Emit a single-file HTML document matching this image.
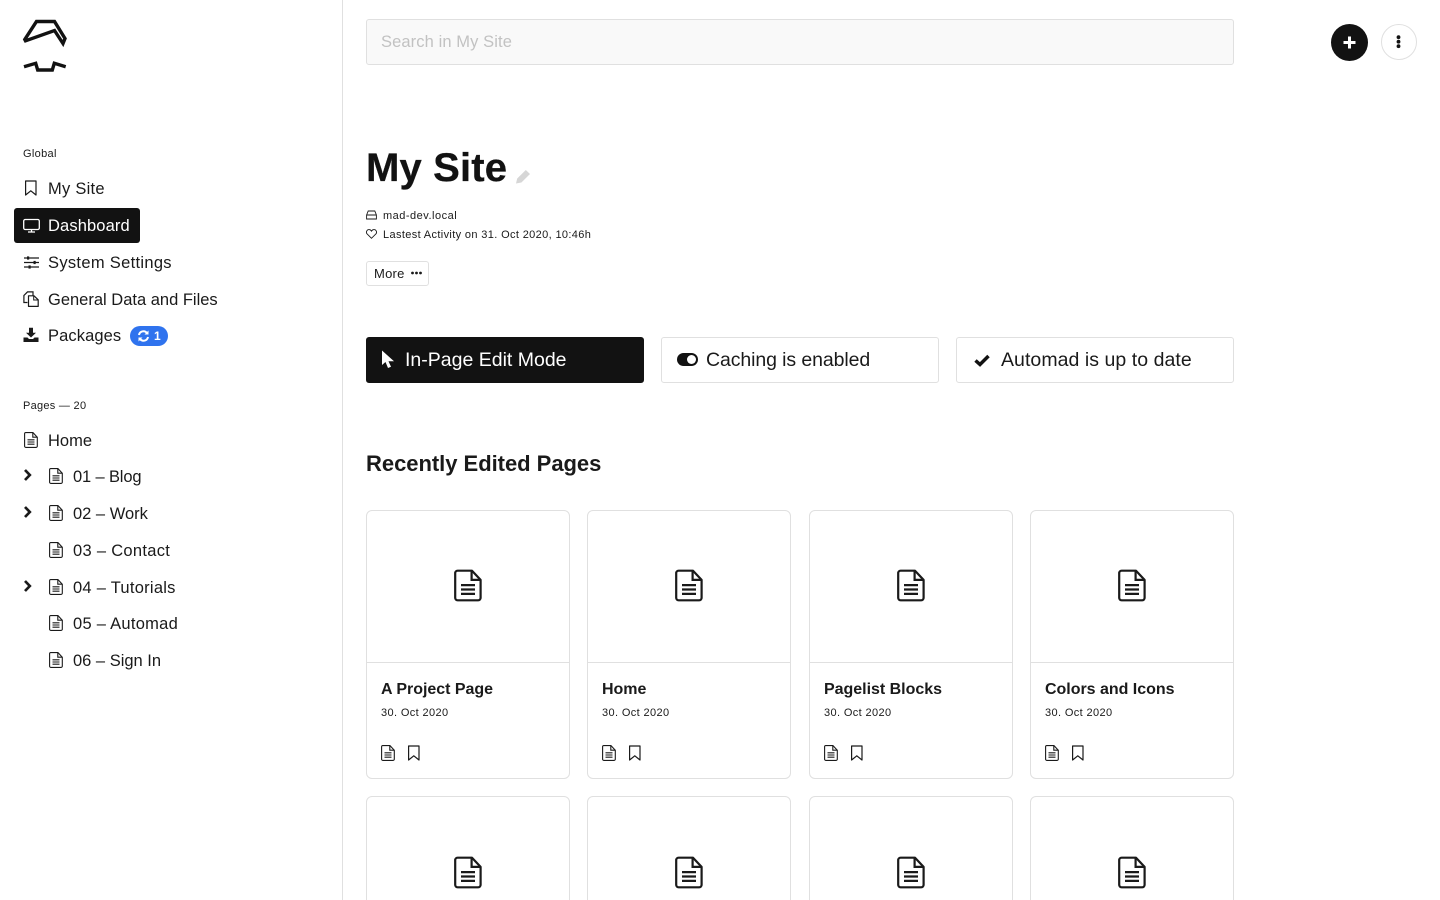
<!DOCTYPE html>
<html lang="en"><head><meta charset="utf-8"><title>My Site</title>
<style>
html,body{margin:0;padding:0;width:1440px;height:900px;overflow:hidden;background:#fff}
body{position:relative;font-family:"Liberation Sans",sans-serif;color:#121212;-webkit-font-smoothing:antialiased}
.t{position:absolute;white-space:nowrap;line-height:20px;height:20px}
.n{font-size:16.5px;color:#1a1a1a}
.s{font-size:11px;letter-spacing:.33px;color:#1a1a1a}
.h{font-size:19.5px;color:#1a1a1a}
.b{position:absolute;box-sizing:border-box;border:1px solid #e0e0e0;border-radius:3px;background:#fff}
svg{position:absolute;overflow:visible}
.card{position:absolute;box-sizing:border-box;width:204px;height:269px;border:1px solid #e0e0e0;border-radius:6px;background:#fff;overflow:hidden}
.card .l{position:absolute;left:0;right:0;top:151px;height:1px;background:#e0e0e0}
.card .ti{position:absolute;left:14px;top:167px;font-size:16px;font-weight:bold;line-height:20px;white-space:nowrap;color:#1a1a1a;margin-top:2px;letter-spacing:-.02px}
.card .da{position:absolute;left:14px;top:192px;font-size:11px;line-height:20px;white-space:nowrap;letter-spacing:.38px;color:#1a1a1a}
</style></head><body>
<svg width="0" height="0" style="position:absolute">
<defs>
<symbol id="doc" viewBox="0 0 16 16"><path d="M2.800.6H10L14.300 5.200V14.200a1.200 1.200 0 0 1-1.200 1.200H2.800a1.200 1.200 0 0 1-1.200-1.200V1.800A1.200 1.200 0 0 1 2.800.6z" fill="none" stroke="currentColor" stroke-width="1.100" stroke-linejoin="round"/><path d="M9.800.8V5.200h4.500" fill="none" stroke="currentColor" stroke-width="1.100"/><path d="M4.500 7.800h7M4.500 10h7M4.500 12.200h7" stroke="currentColor" stroke-width="1.100"/></symbol>
<symbol id="bm" viewBox="0 0 16 16"><path d="M2.600 1h10.400v14L7.800 10.800 2.600 15z" fill="none" stroke="currentColor" stroke-width="1.200" stroke-linejoin="round"/></symbol>
<symbol id="chev" viewBox="0 0 16 16"><path d="M5 3l4.800 5L5 13" fill="none" stroke="currentColor" stroke-width="2.700"/></symbol>
</defs></svg>

<div style="position:absolute;left:342px;top:0;width:1px;height:900px;background:#e0e0e0"></div>

<svg style="left:23px;top:19px" width="44" height="54" viewBox="0 0 44 54"><path d="M2.500 21.800 1.800 20.500 13.500 2.500H31.500L42 19.500 40 24.500 31.500 11.500z" fill="none" stroke="#121212" stroke-width="3.400"/><path d="M1 47.700 12.700 44.300 14.700 51H29.300L31.300 44.300 42.700 47.700" fill="none" stroke="#121212" stroke-width="3.400"/></svg>

<div class="t s" style="left:23px;top:144px">Global</div>
<svg style="left:23px;top:180px;color:#1a1a1a" width="16" height="16"><use href="#bm"/></svg>
<div class="t n" style="left:48px;top:179px;letter-spacing:.25px">My Site</div>
<div style="position:absolute;left:14px;top:208px;width:126px;height:35px;background:#121212;border-radius:3px"></div>
<svg style="left:23px;top:217px" width="17" height="16" viewBox="0 0 17 16"><rect x=".7" y="2.500" width="15.600" height="10" rx="1.500" fill="none" stroke="#fff" stroke-width="1.300"/><path d="M5 15h7M8.500 12.500V15" stroke="#fff" stroke-width="1.300"/></svg>
<div class="t n" style="left:48px;top:216px;color:#fff;letter-spacing:.12px">Dashboard</div>
<svg style="left:24px;top:256px" width="15" height="13" viewBox="0 0 15 13"><path d="M0 2h15M0 6.500h15M0 11h15" stroke="#1a1a1a" stroke-width="1.200"/><rect x="3" y=".4" width="2.200" height="3.200" fill="#1a1a1a"/><rect x="9.500" y="4.900" width="2.200" height="3.200" fill="#1a1a1a"/><rect x="4.500" y="9.400" width="2.200" height="3.200" fill="#1a1a1a"/></svg>
<div class="t n" style="left:48px;top:253px;letter-spacing:.31px">System Settings</div>
<svg style="left:23px;top:291px" width="16" height="16" viewBox="0 0 16 16"><path d="M4.500 11.500H.9V4.500L4.500.9H10V4.500" fill="none" stroke="#1a1a1a" stroke-width="1.200"/><path d="M5.500 4.800H11l4.200 4v6.600H5.500z" fill="#fff" stroke="#1a1a1a" stroke-width="1.200" stroke-linejoin="round"/><path d="M10.700 5v4h4.300" fill="none" stroke="#1a1a1a" stroke-width="1"/></svg>
<div class="t n" style="left:48px;top:290px">General Data and Files</div>
<svg style="left:23px;top:327px" width="16" height="16" viewBox="0 0 16 16"><path d="M6 .7h4v5h3L8 10.500 3 5.700h3z" fill="#1a1a1a"/><path d="M.5 10.500h4L6 12h4l1.500-1.500h4V15H.5z" fill="#1a1a1a"/></svg>
<div class="t n" style="left:48px;top:326px;letter-spacing:.1px">Packages</div>
<div style="position:absolute;left:130px;top:326px;width:38px;height:20px;border-radius:10px;background:#2f73ee"></div>
<svg style="left:137px;top:330px" width="13" height="12" viewBox="0 0 13 12"><path d="M2 5A4.500 4.500 0 0 1 9.800 2.800M11 7A4.500 4.500 0 0 1 3.200 9.200" fill="none" stroke="#fff" stroke-width="2"/><path d="M11.500.500v4h-4zM1.500 11.500v-4h4z" fill="#fff"/></svg>
<div class="t" style="left:154px;top:326px;font-size:12px;font-weight:bold;color:#fff">1</div>

<div class="t s" style="left:23px;top:396px;letter-spacing:.28px">Pages — 20</div>
<svg style="left:23px;top:432px;color:#1a1a1a" width="16" height="16"><use href="#doc"/></svg>
<div class="t n" style="left:48px;top:431px">Home</div>

<svg style="left:19.500px;top:467px;color:#1a1a1a" width="16" height="16"><use href="#chev"/></svg>
<svg style="left:48px;top:468px;color:#1a1a1a" width="16" height="16"><use href="#doc"/></svg>
<div class="t n" style="left:73px;top:467px;letter-spacing:-.15px">01 – Blog</div>
<svg style="left:19.500px;top:504px;color:#1a1a1a" width="16" height="16"><use href="#chev"/></svg>
<svg style="left:48px;top:505px;color:#1a1a1a" width="16" height="16"><use href="#doc"/></svg>
<div class="t n" style="left:73px;top:504px">02 – Work</div>
<svg style="left:48px;top:542px;color:#1a1a1a" width="16" height="16"><use href="#doc"/></svg>
<div class="t n" style="left:73px;top:541px;letter-spacing:.3px">03 – Contact</div>
<svg style="left:19.500px;top:578px;color:#1a1a1a" width="16" height="16"><use href="#chev"/></svg>
<svg style="left:48px;top:579px;color:#1a1a1a" width="16" height="16"><use href="#doc"/></svg>
<div class="t n" style="left:73px;top:578px;letter-spacing:.26px">04 – Tutorials</div>
<svg style="left:48px;top:615px;color:#1a1a1a" width="16" height="16"><use href="#doc"/></svg>
<div class="t n" style="left:73px;top:614px;letter-spacing:.27px">05 – Automad</div>
<svg style="left:48px;top:652px;color:#1a1a1a" width="16" height="16"><use href="#doc"/></svg>
<div class="t n" style="left:73px;top:651px">06 – Sign In</div>

<div class="b" style="left:366px;top:19px;width:868px;height:46px;background:#f9f9f9"></div>
<div class="t" style="left:381px;top:32px;font-size:16.500px;letter-spacing:.1px;color:#c2c2c2">Search in My Site</div>

<div style="position:absolute;left:1331px;top:24px;width:37px;height:37px;border-radius:50%;background:#121212"></div>
<svg style="left:1343px;top:36px" width="13" height="13"><path d="M6.500 .5v12M.5 6.500h12" stroke="#fff" stroke-width="3"/></svg>
<div style="position:absolute;left:1381px;top:24px;width:36px;height:36px;box-sizing:border-box;border:1px solid #e0e0e0;border-radius:50%;background:#fff"></div>
<svg style="left:1396px;top:35px" width="5" height="14"><circle cx="2.500" cy="2.200" r="1.900" fill="#121212"/><circle cx="2.500" cy="6.700" r="1.900" fill="#121212"/><circle cx="2.500" cy="11.200" r="1.900" fill="#121212"/></svg>

<div class="t" style="left:366px;top:148px;font-size:40px;line-height:40px;height:40px;font-weight:bold;letter-spacing:.15px;color:#121212;-webkit-text-stroke:.3px #121212">My Site</div>
<svg style="left:515px;top:168px" width="16" height="16" viewBox="0 0 16 16"><path d="M1 15.500 2.200 10.500 10.800 2l4.200 4-8.600 8.500z" fill="#d6d6d6"/></svg>

<svg style="left:366px;top:210px" width="11" height="10" viewBox="0 0 11 10"><path d="M.6 5 2.200 1h6.600L10.400 5v4H.6zM.6 5h9.800" fill="none" stroke="#1a1a1a" stroke-width=".9"/></svg>
<div class="t s" style="left:383px;top:206px;letter-spacing:.5px">mad-dev.local</div>
<svg style="left:366px;top:229px" width="11" height="10" viewBox="0 0 11 10"><path d="M5.500 9.300 1 4.800C-.4 3 1 .6 3 .6c1.100 0 2 .6 2.500 1.500C6 1.200 6.900.6 8 .6c2 0 3.400 2.400 2 4.200z" fill="none" stroke="#1a1a1a" stroke-width=".9"/></svg>
<div class="t s" style="left:383px;top:225px;letter-spacing:.36px">Lastest Activity on 31. Oct 2020, 10:46h</div>

<div class="b" style="left:366px;top:261px;width:63px;height:25px"></div>
<div class="t" style="left:374px;top:264px;font-size:13px;letter-spacing:.25px;color:#1a1a1a">More</div>
<svg style="left:411px;top:271px" width="11" height="4"><circle cx="1.500" cy="2" r="1.400" fill="#1a1a1a"/><circle cx="5.500" cy="2" r="1.400" fill="#1a1a1a"/><circle cx="9.500" cy="2" r="1.400" fill="#1a1a1a"/></svg>

<div style="position:absolute;left:366px;top:337px;width:278px;height:46px;background:#121212;border-radius:3px"></div>
<svg style="left:381px;top:350px" width="14" height="19" viewBox="0 0 14 19"><path d="M1 .5v14.500l3.500-3 2.500 6 3-1.200-2.500-5.600h5.500z" fill="#fff"/></svg>
<div class="t h" style="left:405px;top:350px;color:#fff">In-Page Edit Mode</div>

<div class="b" style="left:661px;top:337px;width:278px;height:46px"></div>
<svg style="left:677px;top:353px" width="22" height="14" viewBox="0 0 22 14"><rect x="0" y="0" width="21" height="13" rx="6.500" fill="#121212"/><circle cx="14.500" cy="6.500" r="4.500" fill="#fff"/></svg>
<div class="t h" style="left:706px;top:350px;letter-spacing:-.1px">Caching is enabled</div>

<div class="b" style="left:956px;top:337px;width:278px;height:46px"></div>
<svg style="left:974px;top:354px" width="16" height="13" viewBox="0 0 16 13"><path d="M1.500 6.500 6 10.500l8.500-8.500" fill="none" stroke="#121212" stroke-width="3.500"/></svg>
<div class="t h" style="left:1001px;top:350px;letter-spacing:.05px">Automad is up to date</div>

<div class="t" style="left:366px;top:454px;font-size:22px;font-weight:bold;letter-spacing:-.03px;color:#1a1a1a">Recently Edited Pages</div>

<div class="card" style="left:366px;top:510px"><div class="l"></div><div class="ti">A Project Page</div><div class="da">30. Oct 2020</div></div>
<svg style="left:452px;top:569px;color:#1a1a1a" width="32" height="33"><use href="#doc" width="32" height="33"/></svg>
<svg style="left:380px;top:745px;color:#1a1a1a" width="16" height="16"><use href="#doc"/></svg>
<svg style="left:406px;top:745px;color:#1a1a1a" width="16" height="16"><use href="#bm"/></svg>

<div class="card" style="left:587px;top:510px"><div class="l"></div><div class="ti">Home</div><div class="da">30. Oct 2020</div></div>
<svg style="left:673px;top:569px;color:#1a1a1a" width="32" height="33"><use href="#doc" width="32" height="33"/></svg>
<svg style="left:601px;top:745px;color:#1a1a1a" width="16" height="16"><use href="#doc"/></svg>
<svg style="left:627px;top:745px;color:#1a1a1a" width="16" height="16"><use href="#bm"/></svg>

<div class="card" style="left:809px;top:510px"><div class="l"></div><div class="ti">Pagelist Blocks</div><div class="da">30. Oct 2020</div></div>
<svg style="left:895px;top:569px;color:#1a1a1a" width="32" height="33"><use href="#doc" width="32" height="33"/></svg>
<svg style="left:823px;top:745px;color:#1a1a1a" width="16" height="16"><use href="#doc"/></svg>
<svg style="left:849px;top:745px;color:#1a1a1a" width="16" height="16"><use href="#bm"/></svg>

<div class="card" style="left:1030px;top:510px"><div class="l"></div><div class="ti">Colors and Icons</div><div class="da">30. Oct 2020</div></div>
<svg style="left:1116px;top:569px;color:#1a1a1a" width="32" height="33"><use href="#doc" width="32" height="33"/></svg>
<svg style="left:1044px;top:745px;color:#1a1a1a" width="16" height="16"><use href="#doc"/></svg>
<svg style="left:1070px;top:745px;color:#1a1a1a" width="16" height="16"><use href="#bm"/></svg>

<div class="card" style="left:366px;top:796px"></div>
<div class="card" style="left:587px;top:796px"></div>
<div class="card" style="left:809px;top:796px"></div>
<div class="card" style="left:1030px;top:796px"></div>
<svg style="left:452px;top:856px;color:#1a1a1a" width="32" height="33"><use href="#doc" width="32" height="33"/></svg>
<svg style="left:673px;top:856px;color:#1a1a1a" width="32" height="33"><use href="#doc" width="32" height="33"/></svg>
<svg style="left:895px;top:856px;color:#1a1a1a" width="32" height="33"><use href="#doc" width="32" height="33"/></svg>
<svg style="left:1116px;top:856px;color:#1a1a1a" width="32" height="33"><use href="#doc" width="32" height="33"/></svg>
</body></html>
